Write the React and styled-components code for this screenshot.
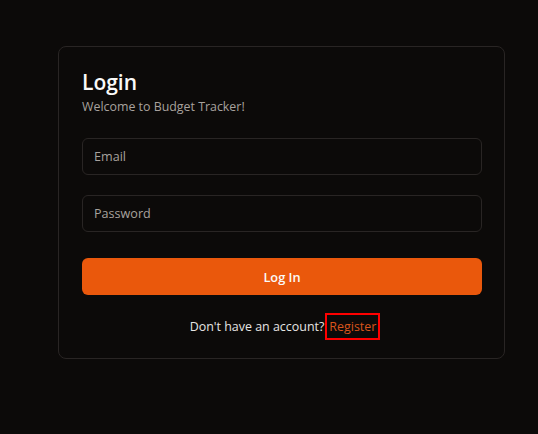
import React from "react";
import styled, { createGlobalStyle } from "styled-components";

const Global = createGlobalStyle`
  html, body { margin: 0; padding: 0; background: #0c0a09; }
  body { font-family: "Open Sans", "Noto Sans", sans-serif; color: #fafaf9; }
  * { box-sizing: border-box; }
`;

const Page = styled.div`
  min-height: 434px;
  padding: 46px 0 0 58px;
`;

const Card = styled.div`
  width: 447px;
  height: 313px;
  border: 1px solid #292524;
  border-radius: 8px;
  background: #0c0a09;
  padding: 23px 22px 0 23px;
  display: flex;
  flex-direction: column;
`;

const Title = styled.h1`
  margin: 0;
  font-size: 21px;
  font-weight: 600;
  line-height: 24px;
  color: #fafaf9;
`;

const Subtitle = styled.p`
  margin: 3px 0 0;
  font-size: 12.4px;
  line-height: 20px;
  color: #a8a29e;
`;

const Form = styled.form`
  margin-top: 21px;
  display: flex;
  flex-direction: column;
  gap: 20px;
`;

const Input = styled.input`
  width: 400px;
  height: 37px;
  border: 1px solid #292524;
  border-radius: 6px;
  background: transparent;
  padding: 0 11px;
  font-family: inherit;
  font-size: 12.6px;
  color: #fafaf9;
  outline: none;
  &::placeholder { color: #a8a29e; }
`;

const Button = styled.button`
  margin-top: 6px;
  width: 400px;
  height: 37px;
  border: none;
  border-radius: 6px;
  background: #ea580c;
  color: #fafaf9;
  font-family: inherit;
  font-size: 12.8px;
  font-weight: 600;
`;

const Footer = styled.div`
  margin-top: 20px;
  padding-left: 4px;
  display: flex;
  justify-content: center;
  align-items: center;
  font-size: 12.45px;
  color: #e7e5e4;
`;

const RegisterLink = styled.a`
  margin-left: 3px;
  padding: 3px 2px;
  outline: 2px solid #ff0000;
  outline-offset: 0;
  color: #d9541c;
  text-decoration: none;
`;

export default function App() {
  return (
    <Page>
      <Global />
      <Card>
        <Title>Login</Title>
        <Subtitle>Welcome to Budget Tracker!</Subtitle>
        <Form onSubmit={(e) => e.preventDefault()}>
          <Input type="email" placeholder="Email" />
          <Input type="password" placeholder="Password" />
          <Button type="submit">Log In</Button>
        </Form>
        <Footer>
          Don't have an account?
          <RegisterLink href="#">Register</RegisterLink>
        </Footer>
      </Card>
    </Page>
  );
}
